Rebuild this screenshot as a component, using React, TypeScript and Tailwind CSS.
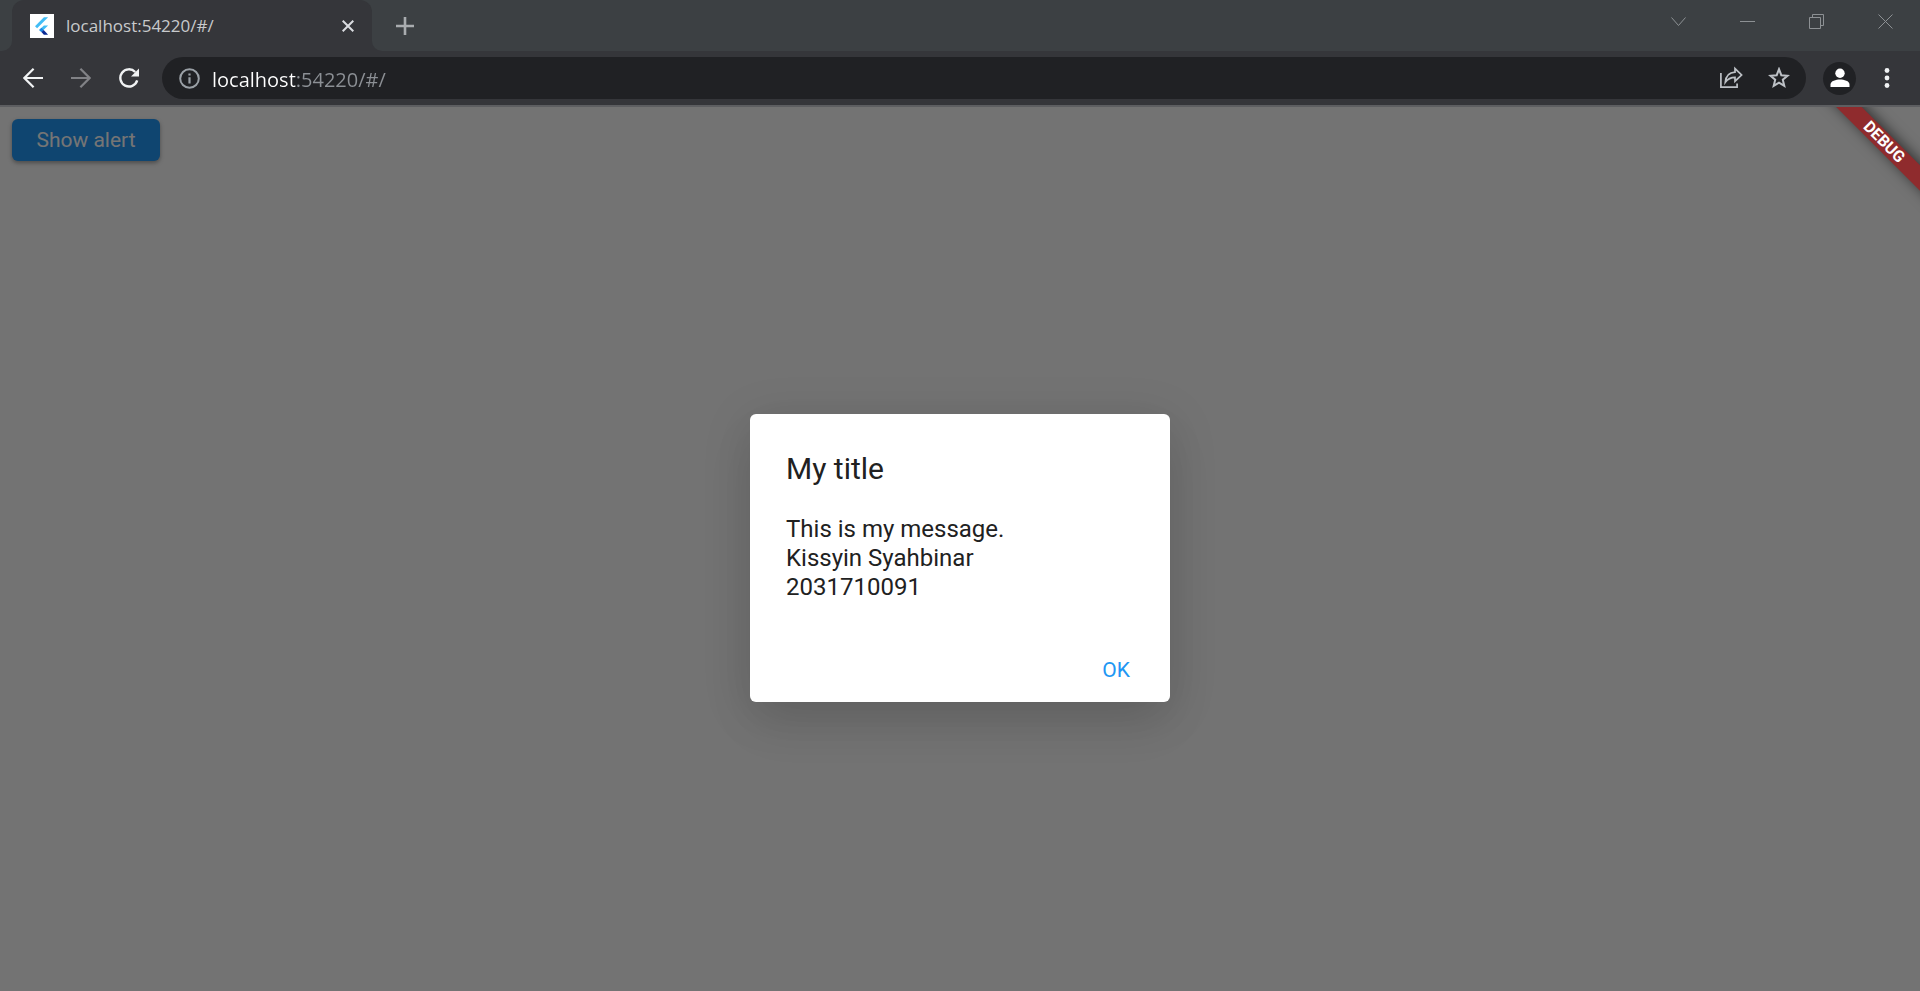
import type { ReactNode } from "react";

function FlutterLogo() {
  return (
    <svg viewBox="0 0 24 24" className="size-6 shrink-0" aria-hidden="true">
      <rect width="24" height="24" fill="#fff" />
      <path d="M5 12.2 13.900 3.300h4.200L7.100 14.300z" fill="#42bdf5" />
      <path d="M13.900 11.400h4.200l-4.400 4.400-2.300 2.300-2.200-2.200z" fill="#42bdf5" />
      <path d="M9.200 15.900l2.200-2.200 2.300 2.200-2.300 2.200z" fill="#1e88e5" />
      <path d="M11.400 18.100l2.300-2.200 4.400 4.800h-4.200z" fill="#0a2a94" />
    </svg>
  );
}

function WindowButton({ label, children }: { label: string; children: ReactNode }) {
  return (
    <button type="button" aria-label={label} className="flex h-[43px] w-[69px] items-center justify-center text-[#8d9194]">
      <svg viewBox="0 0 15 15" className="size-[15px]" fill="none" stroke="currentColor">
        {children}
      </svg>
    </button>
  );
}

function TabStrip() {
  return (
    <header className="flex h-[51px]">
      <div className="w-3 rounded-br-[10px] bg-[#3c4043]" />
      <div className="w-[360px] bg-[linear-gradient(#3c4043_50%,#35363a_50%)]">
        <div className="flex h-full items-center gap-3 rounded-t-[12px] bg-[#35363a] pr-[15px] pl-[18px]">
          <FlutterLogo />
          <span className="flex-1 text-[17px] leading-6 text-[#c8cacc]">localhost:54220/#/</span>
          <button type="button" aria-label="Close tab" className="flex size-[18px] items-center justify-center text-[#dadce0]">
            <svg viewBox="0 0 12 12" className="size-3" fill="none" stroke="currentColor" strokeWidth="2">
              <path d="M.7.7l10.6 10.6M11.3.7.7 11.3" />
            </svg>
          </button>
        </div>
      </div>
      <div className="flex flex-1 items-start rounded-bl-[10px] bg-[#3c4043]">
        <button type="button" aria-label="New tab" className="ml-3 flex h-[51px] w-[42px] items-center justify-center text-[#a9acaf]">
          <svg viewBox="0 0 18 18" className="size-[18px]" fill="none" stroke="currentColor" strokeWidth="2.6">
            <path d="M9 0v18M0 9h18" />
          </svg>
        </button>
        <div className="ml-auto flex">
          <WindowButton label="Search tabs">
            <path d="M.5 3.5l7 8 7-8" />
          </WindowButton>
          <WindowButton label="Minimize">
            <path d="M0 7.5h15" />
          </WindowButton>
          <WindowButton label="Restore">
            <path d="M.5 3.5h11v11H.5zM3.5 3.5v-3h11v11h-3" />
          </WindowButton>
          <WindowButton label="Close window">
            <path d="M.5.5l14 14M14.5.5l-14 14" />
          </WindowButton>
        </div>
      </div>
    </header>
  );
}

function Toolbar() {
  return (
    <nav className="flex h-14 items-center border-b-2 border-[#5d5e61] pl-[9px]">
      <button type="button" aria-label="Back" className="flex size-12 items-center justify-center text-[#f1f3f4]">
        <svg viewBox="0 0 20 20" className="size-5" fill="none" stroke="currentColor" strokeWidth="2.2">
          <path d="M20 10H1.6M10.6.8 1.4 10l9.2 9.2" />
        </svg>
      </button>
      <button type="button" aria-label="Forward" className="flex size-12 items-center justify-center text-[#818286]">
        <svg viewBox="0 0 20 20" className="size-5" fill="none" stroke="currentColor" strokeWidth="2.2">
          <path d="M0 10h18.4M9.4.8l9.2 9.2-9.2 9.2" />
        </svg>
      </button>
      <button type="button" aria-label="Reload" className="flex size-12 items-center justify-center text-[#f1f3f4]">
        <svg viewBox="0 0 20 20" className="size-5" fill="none" stroke="currentColor" strokeWidth="2.4">
          <path d="M18.2 12.4A8.6 8.6 0 1 1 16.2 4" />
          <path d="M20 .6v8h-8z" fill="currentColor" stroke="none" />
        </svg>
      </button>
      <div className="ml-[9px] flex h-[42px] flex-1 items-center rounded-full bg-[#202124] pr-4 pl-[17px]">
        <button type="button" aria-label="View site information" className="flex size-[21px] items-center justify-center text-[#9aa0a6]">
          <svg viewBox="0 0 21 21" className="size-[21px]" fill="none" stroke="currentColor" strokeWidth="2">
            <circle cx="10.5" cy="10.5" r="9.3" />
            <path d="M10.5 9.2v6.2M10.5 5.4v2.2" strokeWidth="2.2" />
          </svg>
        </button>
        <input
          type="text"
          aria-label="Address and search bar"
          defaultValue="localhost:54220/#/"
          className="ml-3 h-9 min-w-0 flex-1 bg-[linear-gradient(to_right,#ffffff_84px,#8c9095_84px)] bg-clip-text pt-[2px] text-[20px] text-transparent caret-white outline-none"
        />
        <button type="button" aria-label="Share this page" className="flex size-12 items-center justify-center text-[#bdc1c6]">
          <svg viewBox="0 0 24 24" className="size-6" fill="none" stroke="currentColor" strokeWidth="1.7">
            <path d="M1.9 7v14.2h16.2v-3.6" />
            <path d="M6.3 16.3C6.8 10.2 10.2 6.6 16 6.2V2.6L22.6 9 16 15.2v-3.8c-4.4 0-7.3 1.6-9.7 4.9z" />
          </svg>
        </button>
        <button type="button" aria-label="Bookmark this tab" className="flex h-12 w-[35px] items-center justify-end text-[#bdc1c6]">
          <svg viewBox="0 0 22 22" className="size-[22px]" fill="none" stroke="currentColor" strokeWidth="2">
            <path d="M11 2.2l2.300 6 6.300.5-4.800 4 1.500 6.200-5.300-3.300-5.300 3.300 1.500-6.200-4.800-4 6.300-.5z" />
          </svg>
        </button>
      </div>
      <button type="button" aria-label="Profile" className="ml-[17px] flex size-[33px] items-center justify-center rounded-full bg-[#202124] text-white">
        <svg viewBox="0 0 20 20" className="size-5" fill="currentColor">
          <circle cx="10" cy="5.2" r="4.7" />
          <path d="M.5 19v-2.4C.5 13 6 11.6 10 11.6s9.500 1.400 9.500 5V19z" />
        </svg>
      </button>
      <button type="button" aria-label="Browser menu" className="mr-[9px] ml-[7px] flex size-12 items-center justify-center text-[#f1f3f4]">
        <svg viewBox="0 0 20 20" className="size-5" fill="currentColor">
          <circle cx="10" cy="2.5" r="2.4" />
          <circle cx="10" cy="10" r="2.4" />
          <circle cx="10" cy="17.5" r="2.4" />
        </svg>
      </button>
    </nav>
  );
}

function DebugBanner() {
  return (
    <div className="pointer-events-none absolute top-0 right-0 size-[120px] overflow-hidden">
      <div className="absolute top-[26px] left-[-16px] h-[18px] w-[200px] rotate-45 bg-[#8f2b2d] text-center text-[16px] leading-[18px] font-bold text-white shadow-[0_-2px_14px_rgba(0,0,0,0.6)]">
        DEBUG
      </div>
    </div>
  );
}

function AlertDialog() {
  return (
    <div
      role="alertdialog"
      aria-modal="true"
      aria-labelledby="alert-title"
      aria-describedby="alert-message"
      className="w-[420px] rounded-[6px] bg-white text-[#212121] shadow-[0_24px_46px_-6px_rgba(0,0,0,0.1),0_8px_50px_2px_rgba(0,0,0,0.1)]"
    >
      <h1 id="alert-title" className="px-9 pt-9 text-[30px] leading-[37px]">
        My title
      </h1>
      <p id="alert-message" className="px-9 pt-7 text-[24px] leading-[29px]">
        This is my message.
        <br />
        Kissyin Syahbinar
        <br />
        2031710091
      </p>
      <div className="flex justify-end px-3 pt-12 pb-3">
        <button type="button" className="h-10 w-[84px] text-[21px] leading-10 text-[#2196f3]">
          OK
        </button>
      </div>
    </div>
  );
}

export default function App() {
  return (
    <div className="flex min-h-screen flex-col bg-[#35363a] font-['Open_Sans',sans-serif]">
      <TabStrip />
      <Toolbar />
      <main className="relative flex flex-1 flex-col items-start bg-[#fafafa] p-3 font-[Roboto,sans-serif]">
        <button
          type="button"
          className="h-[42px] min-w-[148px] rounded-[6px] bg-[#2196f3] px-6 pt-[2px] text-[21px] text-white shadow-[0_2px_4px_rgba(0,0,0,0.35)]"
        >
          Show alert
        </button>
        <div className="absolute inset-0 flex items-center justify-center bg-black/54 pt-[18px]">
          <AlertDialog />
        </div>
        <DebugBanner />
      </main>
    </div>
  );
}
